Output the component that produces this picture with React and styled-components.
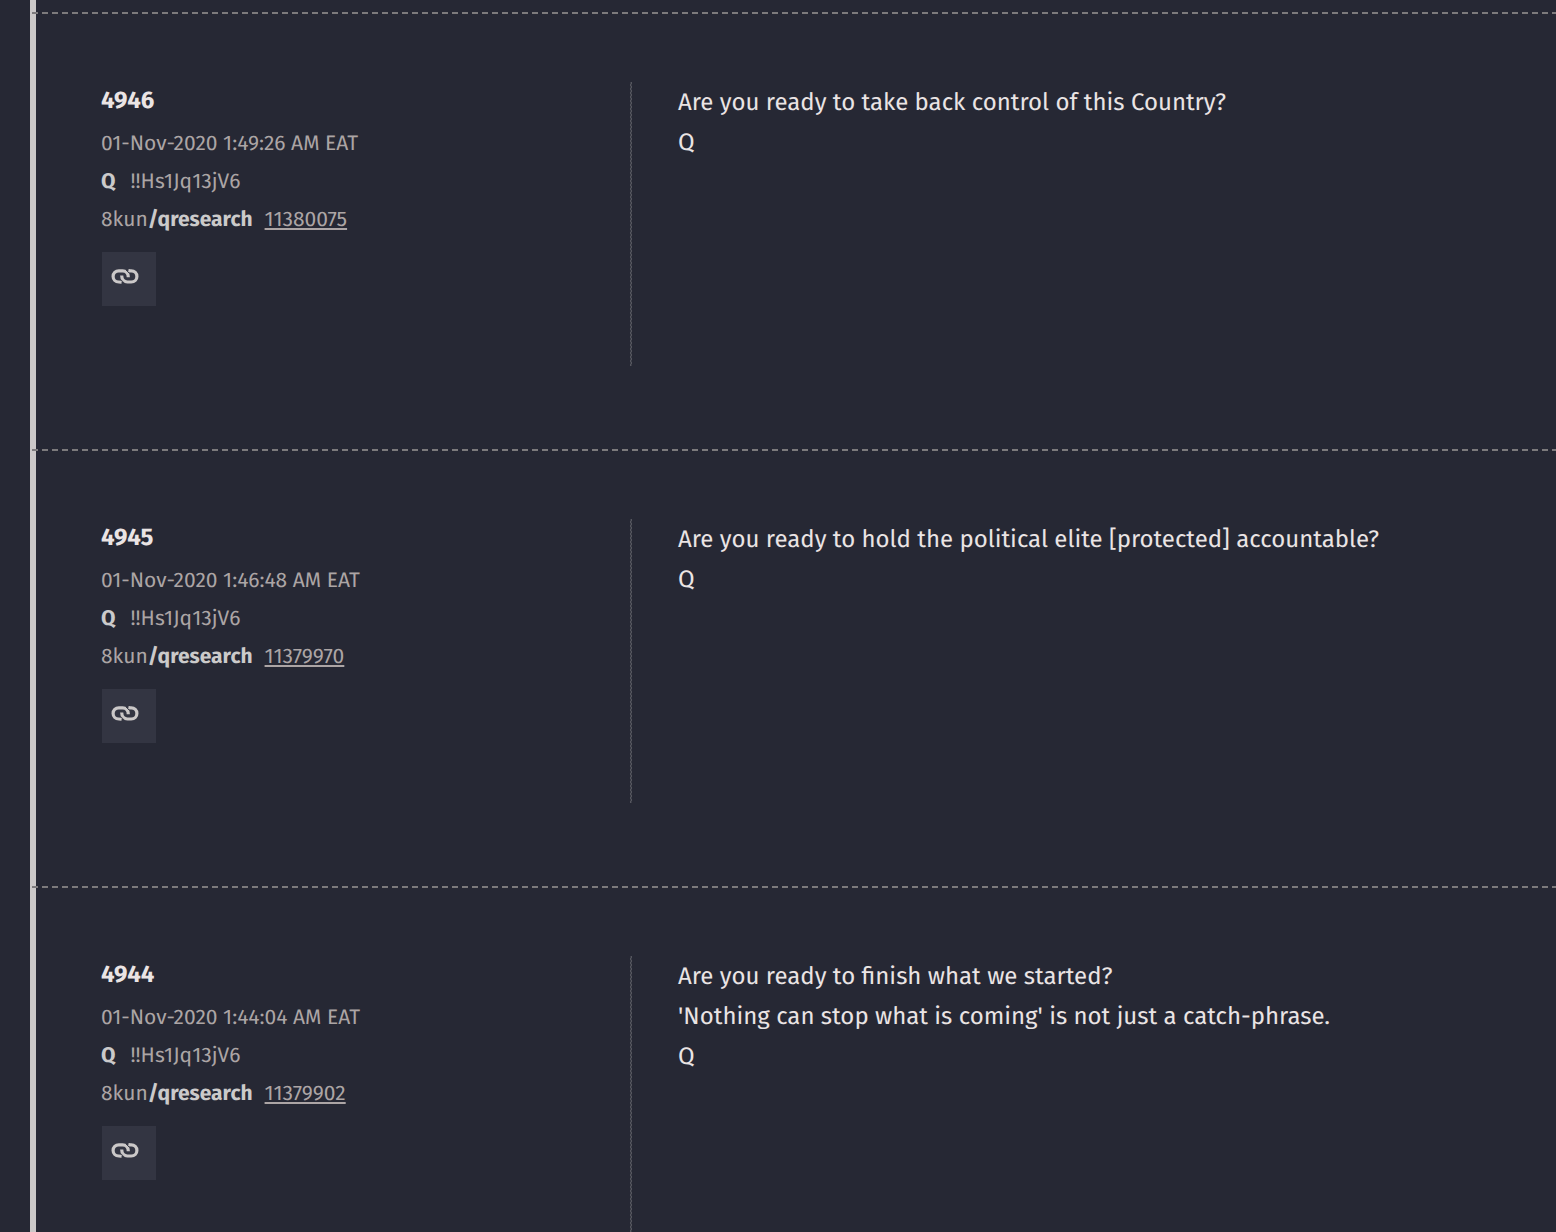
import React from 'react';
import styled, { createGlobalStyle } from 'styled-components';

const GlobalStyle = createGlobalStyle`
  body {
    margin: 0;
    background: #262834;
    font-family: 'Fira Sans', 'Noto Sans', sans-serif;
    text-rendering: geometricPrecision;
  }
`;

const Timeline = styled.main`
  min-height: 100vh;
  box-sizing: border-box;
  margin-left: 30px;
  padding-top: 12px;
  border-left: 6px solid #cbc8c8;
`;

const Post = styled.article`
  margin-left: -4px;
  padding: 70px 0 83px 69px;
  display: grid;
  grid-template-columns: 4fr 7fr;
  background: repeating-linear-gradient(to right, #7c7a7c 0 6px, transparent 6px 10px) top left / 100% 2px no-repeat;
`;

const Meta = styled.header`
  padding-bottom: 60px;
  font-size: 21px;
  line-height: 38px;
  color: #aca5a5;
`;

const Number = styled.h2`
  margin: 0 0 4px;
  font-size: 24px;
  line-height: 38px;
  font-weight: 700;
  color: #eae4e4;
`;

const Line = styled.div`
  display: flex;
  gap: ${(p) => p.$gap || 0}px;
`;

const Strong = styled.strong`
  color: #cbcaca;
`;

const ThreadLink = styled.a`
  color: inherit;
  text-decoration: underline;
  text-underline-offset: 2px;
`;

const LinkButton = styled.button`
  display: flex;
  width: 54px;
  height: 54px;
  margin: 14px 0 0 1px;
  padding: 16px 9px;
  border: 0;
  background: #333542;
  color: #cbc8c8;
  cursor: pointer;
`;

const Message = styled.div`
  padding: 1px 48px;
  background: repeating-conic-gradient(#55565e 0 25%, #3a3c46 25% 50%) top left / 2px 4px repeat-y;
  font-size: 24px;
  line-height: 40px;
  color: #eae4e4;
`;

const Paragraph = styled.p`
  margin: 0;
`;

const posts = [
  {
    id: '4946',
    date: '01-Nov-2020 1:49:26 AM EAT',
    thread: '11380075',
    lines: ['Are you ready to take back control of this Country?', 'Q'],
  },
  {
    id: '4945',
    date: '01-Nov-2020 1:46:48 AM EAT',
    thread: '11379970',
    lines: ['Are you ready to hold the political elite [protected] accountable?', 'Q'],
  },
  {
    id: '4944',
    date: '01-Nov-2020 1:44:04 AM EAT',
    thread: '11379902',
    lines: [
      'Are you ready to finish what we started?',
      "'Nothing can stop what is coming' is not just a catch-phrase.",
      'Q',
    ],
  },
];

function ChainIcon() {
  return (
    <svg width="28" height="16" viewBox="0 0 28 16" fill="none" stroke="currentColor" strokeWidth="3.2" aria-hidden="true">
      <path d="M10.6 14.3C9.3 14.1 8.8 14 7.8 14C4.500 14 2.100 11.500 2.100 8.400S4.500 2.800 7.800 2.800H11.600C14.800 2.800 17.300 5 17.300 9.200" />
      <path d="M17.400 2.500C18.700 2.700 19.200 2.800 20.200 2.800C23.500 2.800 25.900 5.300 25.900 8.400S23.500 14 20.200 14H16.400C13.200 14 10.700 11.800 10.700 7.600" />
      <path d="M14.800 1.800L18.200 5.200M13.200 15L9.800 11.600" stroke="#333542" strokeWidth="0.9" />
    </svg>
  );
}

export default function App() {
  return (
    <>
      <GlobalStyle />
      <Timeline>
        {posts.map((post) => (
          <Post key={post.id}>
            <Meta>
              <Number>{post.id}</Number>
              <Line as="time">{post.date}</Line>
              <Line $gap={15}>
                <Strong>Q</Strong>
                <span>!!Hs1Jq13jV6</span>
              </Line>
              <Line $gap={12}>
                <span>
                  8kun<Strong>/qresearch</Strong>
                </span>
                <ThreadLink href={`#${post.thread}`}>{post.thread}</ThreadLink>
              </Line>
              <LinkButton type="button" aria-label={`Link to post ${post.id}`}>
                <ChainIcon />
              </LinkButton>
            </Meta>
            <Message>
              {post.lines.map((line) => (
                <Paragraph key={line}>{line}</Paragraph>
              ))}
            </Message>
          </Post>
        ))}
      </Timeline>
    </>
  );
}
